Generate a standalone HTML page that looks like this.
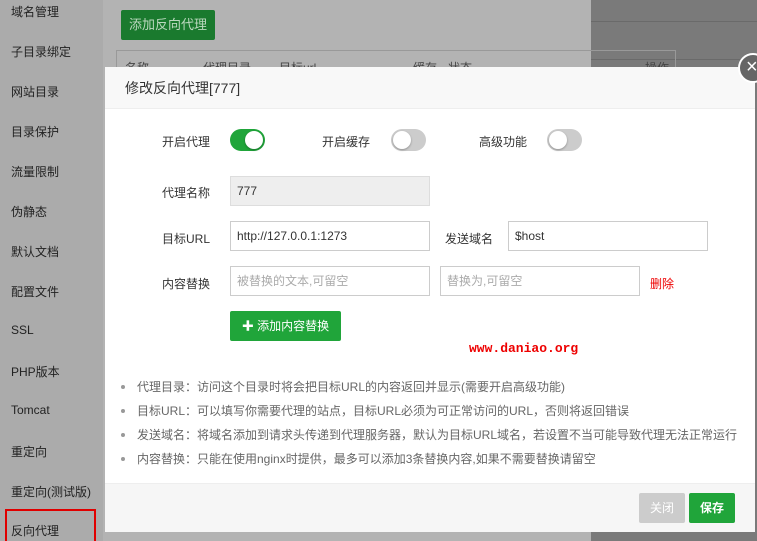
<!DOCTYPE html>
<html><head><meta charset="utf-8"><style>
*{margin:0;padding:0;box-sizing:border-box}
body{width:757px;height:541px;overflow:hidden;position:relative;font-family:"Liberation Sans","Noto Sans CJK SC",sans-serif;font-size:12px;color:#333;background:#9a9a9a}
.side{position:absolute;left:0;top:0;width:103px;height:541px;background:#ababab}
.side div{position:absolute;left:11px;font-size:12px;color:#222}
.mid{position:absolute;left:103px;top:0;width:488px;height:541px;background:#b3b3b3}
.right{position:absolute;left:591px;top:0;width:166px;height:541px;background:#7a7a7a}
.bgbtn{position:absolute;left:121px;top:10px;width:94px;height:30px;background:#1a7a2e;color:#bcd8bf;font-size:13px;line-height:30px;text-align:center;border-radius:2px}
.tbl{position:absolute;left:116px;top:50px;width:560px;height:30px;border:1px solid #999;color:#444}
.modal{position:absolute;left:105px;top:67px;width:650px;height:465px;background:#fff}
.mh{height:42px;background:#f8f8f8;border-bottom:1px solid #eee;padding-left:20px;line-height:42px;font-size:14px;color:#333}
.lbl{position:absolute;font-size:12px;color:#333}
.sw{position:absolute;width:35px;height:22px;border-radius:11px;background:#ccc}
.sw i{position:absolute;top:2px;left:2px;width:18px;height:18px;border-radius:50%;background:#fff;box-shadow:0 1px 2px rgba(0,0,0,.3)}
.sw.on{background:#20a53a}.sw.on i{left:15px}
.in{position:absolute;height:30px;border:1px solid #ccc;padding-left:6px;line-height:28px;font-size:12px;color:#333;background:#fff}
.ph{color:#aaa}
ul{position:absolute;left:16px;top:311px;list-style:none}
li{height:24px;line-height:18px;color:#666;font-size:12px;padding-left:16px;position:relative}
li:before{content:"";position:absolute;left:0;top:7px;width:4px;height:4px;border-radius:50%;background:#999}
.ft{position:absolute;left:0;top:416px;width:650px;height:49px;background:#f6f6f6;border-top:1px solid #eee}
.b{position:absolute;height:30px;line-height:30px;text-align:center;color:#fff;font-size:12px;border-radius:2px}
</style></head><body>
<div class="side">
<div style="top:3px">域名管理</div><div style="top:43px">子目录绑定</div><div style="top:83px">网站目录</div><div style="top:123px">目录保护</div><div style="top:163px">流量限制</div><div style="top:203px">伪静态</div><div style="top:243px">默认文档</div><div style="top:283px">配置文件</div><div style="top:323px">SSL</div><div style="top:363px">PHP版本</div><div style="top:403px">Tomcat</div><div style="top:443px">重定向</div><div style="top:483px">重定向(测试版)</div><div style="top:522px">反向代理</div>
</div>
<div style="position:absolute;left:5px;top:509px;width:91px;height:32px;border:2px solid #e00000;border-bottom:none"></div>
<div class="mid"></div>
<div class="right"><div style="position:absolute;top:21px;left:0;width:166px;height:1px;background:#6a6a6a"></div><div style="position:absolute;top:59px;left:0;width:166px;height:1px;background:#6a6a6a"></div></div>
<div class="bgbtn">添加反向代理</div>
<div class="tbl"><span style="position:absolute;left:8px;top:8px">名称</span><span style="position:absolute;left:86px;top:8px">代理目录</span><span style="position:absolute;left:162px;top:8px">目标url</span><span style="position:absolute;left:296px;top:8px">缓存</span><span style="position:absolute;left:331px;top:8px">状态</span><span style="position:absolute;left:528px;top:8px">操作</span></div>
<div class="modal">
<div class="mh">修改反向代理[777]</div>
<div class="lbl" style="left:57px;top:66px">开启代理</div><div class="sw on" style="left:125px;top:62px"><i></i></div>
<div class="lbl" style="left:217px;top:66px">开启缓存</div><div class="sw" style="left:286px;top:62px"><i></i></div>
<div class="lbl" style="left:374px;top:66px">高级功能</div><div class="sw" style="left:442px;top:62px"><i></i></div>
<div class="lbl" style="left:57px;top:117px">代理名称</div><div class="in" style="left:125px;top:109px;width:200px;background:#eee;border-color:#ddd">777</div>
<div class="lbl" style="left:57px;top:163px">目标URL</div><div class="in" style="left:125px;top:154px;width:200px">http://127.0.0.1:1273</div>
<div class="lbl" style="left:340px;top:163px">发送域名</div><div class="in" style="left:403px;top:154px;width:200px">$host</div>
<div class="lbl" style="left:57px;top:208px">内容替换</div><div class="in ph" style="left:125px;top:199px;width:200px">被替换的文本,可留空</div>
<div class="in ph" style="left:335px;top:199px;width:200px">替换为,可留空</div>
<div class="lbl" style="left:545px;top:208px;color:#e00">删除</div>
<div class="b" style="left:125px;top:244px;width:111px;background:#20a53a;font-size:12px">✚ 添加内容替换</div>
<div class="lbl" style="left:364px;top:274px;color:#e00;font-family:'Liberation Mono',monospace;font-size:13px;font-weight:bold">www.daniao.org</div>
<ul><li>代理目录：访问这个目录时将会把目标URL的内容返回并显示(需要开启高级功能)</li><li>目标URL：可以填写你需要代理的站点，目标URL必须为可正常访问的URL，否则将返回错误</li><li>发送域名：将域名添加到请求头传递到代理服务器，默认为目标URL域名，若设置不当可能导致代理无法正常运行</li><li>内容替换：只能在使用nginx时提供，最多可以添加3条替换内容,如果不需要替换请留空</li></ul>
<div class="ft"><div class="b" style="left:534px;top:9px;width:46px;background:#ccc">关闭</div><div class="b" style="left:584px;top:9px;width:46px;background:#20a53a;font-weight:bold">保存</div></div>
</div>
<div style="position:absolute;left:738px;top:53px;width:30px;height:30px;border-radius:50%;background:#666;border:2px solid #fff;color:#fff;font-size:20px;line-height:25px;padding-left:6px">×</div>
</body></html>
